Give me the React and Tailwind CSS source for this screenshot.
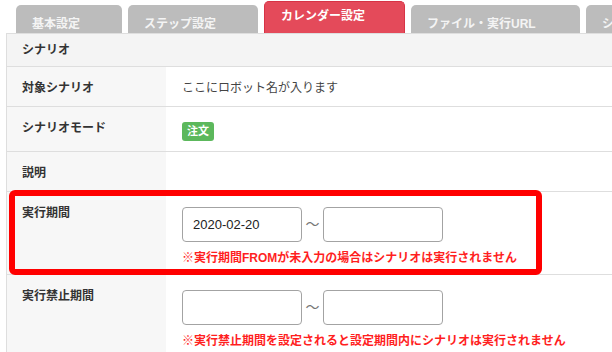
const tabs = [
  { label: "基本設定", w: "w-[106px]" },
  { label: "ステップ設定", w: "w-[130px]" },
  { label: "カレンダー設定", w: "w-[141px]", active: true },
  { label: "ファイル・実行URL", w: "w-[169px]" },
  { label: "シナリオ設定", w: "w-[160px]" },
];

function Tabs() {
  return (
    <div className="flex items-end gap-[6px] pl-[16px] h-[33px]">
      {tabs.map((t) =>
        t.active ? (
          <div
            key={t.label}
            className={`${t.w} shrink-0 h-[32px] rounded-t-[5px] bg-[#e44a5a] border border-[#d73346] border-b-0 pl-[16px] pt-[5px] text-[12px] font-bold text-white`}
          >
            {t.label}
          </div>
        ) : (
          <div
            key={t.label}
            className={`${t.w} shrink-0 h-[28px] rounded-t-[5px] bg-[#bcbcbc] pl-[16px] pt-[10px] text-[12px] font-bold text-[#f4f4f4]`}
          >
            {t.label}
          </div>
        )
      )}
    </div>
  );
}

function DateRange({ from = "" }) {
  return (
    <div className="flex items-center">
      <div className="w-[120px] h-[35px] rounded-[4px] border border-[#a3a3a3] bg-white flex items-center pl-[10px] text-[13px] text-[#222]">
        {from}
      </div>
      <span className="w-[21px] text-center text-[14px] text-[#777]">〜</span>
      <div className="w-[120px] h-[35px] rounded-[4px] border border-[#a3a3a3] bg-white" />
    </div>
  );
}

function Row({ label, h, children, last }) {
  return (
    <div className={`flex ${h} ${last ? "" : "border-b border-[#dedede]"}`}>
      <div className="w-[159px] shrink-0 bg-[#f7f7f7] pl-[15px] pt-[14px] text-[12px] leading-[14px] font-bold text-[#333]">
        {label}
      </div>
      <div className="flex-1 pl-[16px]">{children}</div>
    </div>
  );
}

export default function App() {
  return (
    <div
      className="relative w-[612px] h-[352px] overflow-hidden bg-white"
      style={{ fontFamily: '"Liberation Sans", "Noto Sans CJK JP", sans-serif' }}
    >
      <Tabs />
      <div className="ml-[6px] border-l border-t border-[#dedede]">
        <div className="h-[33px] bg-[#f4f4f4] border-b border-[#dedede] pl-[15px] flex items-center text-[12px] font-bold text-[#333]">
          シナリオ
        </div>
        <Row label="対象シナリオ" h="h-[40px]">
          <div className="pt-[13px] text-[12px] leading-[16px] text-[#444]">
            ここにロボット名が入ります
          </div>
        </Row>
        <Row label="シナリオモード" h="h-[45px]">
          <div className="pt-[11px]">
            <span className="inline-flex items-center justify-center w-[32px] h-[19px] rounded-[3px] bg-[#5cb85c] text-[11px] font-bold text-white">
              注文
            </span>
          </div>
        </Row>
        <Row label="説明" h="h-[40px]" />
        <Row label="実行期間" h="h-[83px]">
          <div className="pt-[15px]">
            <DateRange from="2020-02-20" />
            <div className="mt-[8px] text-[12px] leading-[16px] font-bold text-[#ff1f1f]">
              ※実行期間FROMが未入力の場合はシナリオは実行されません
            </div>
          </div>
        </Row>
        <Row label="実行禁止期間" h="h-[90px]" last>
          <div className="pt-[15px]">
            <DateRange />
            <div className="mt-[8px] text-[12px] leading-[16px] font-bold text-[#ff1f1f]">
              ※実行禁止期間を設定されると設定期間内にシナリオは実行されません
            </div>
          </div>
        </Row>
      </div>
      <div className="absolute left-[9px] top-[190px] w-[533px] h-[85px] border-[6px] border-[#ff0000] rounded-[6px]" />
    </div>
  );
}
